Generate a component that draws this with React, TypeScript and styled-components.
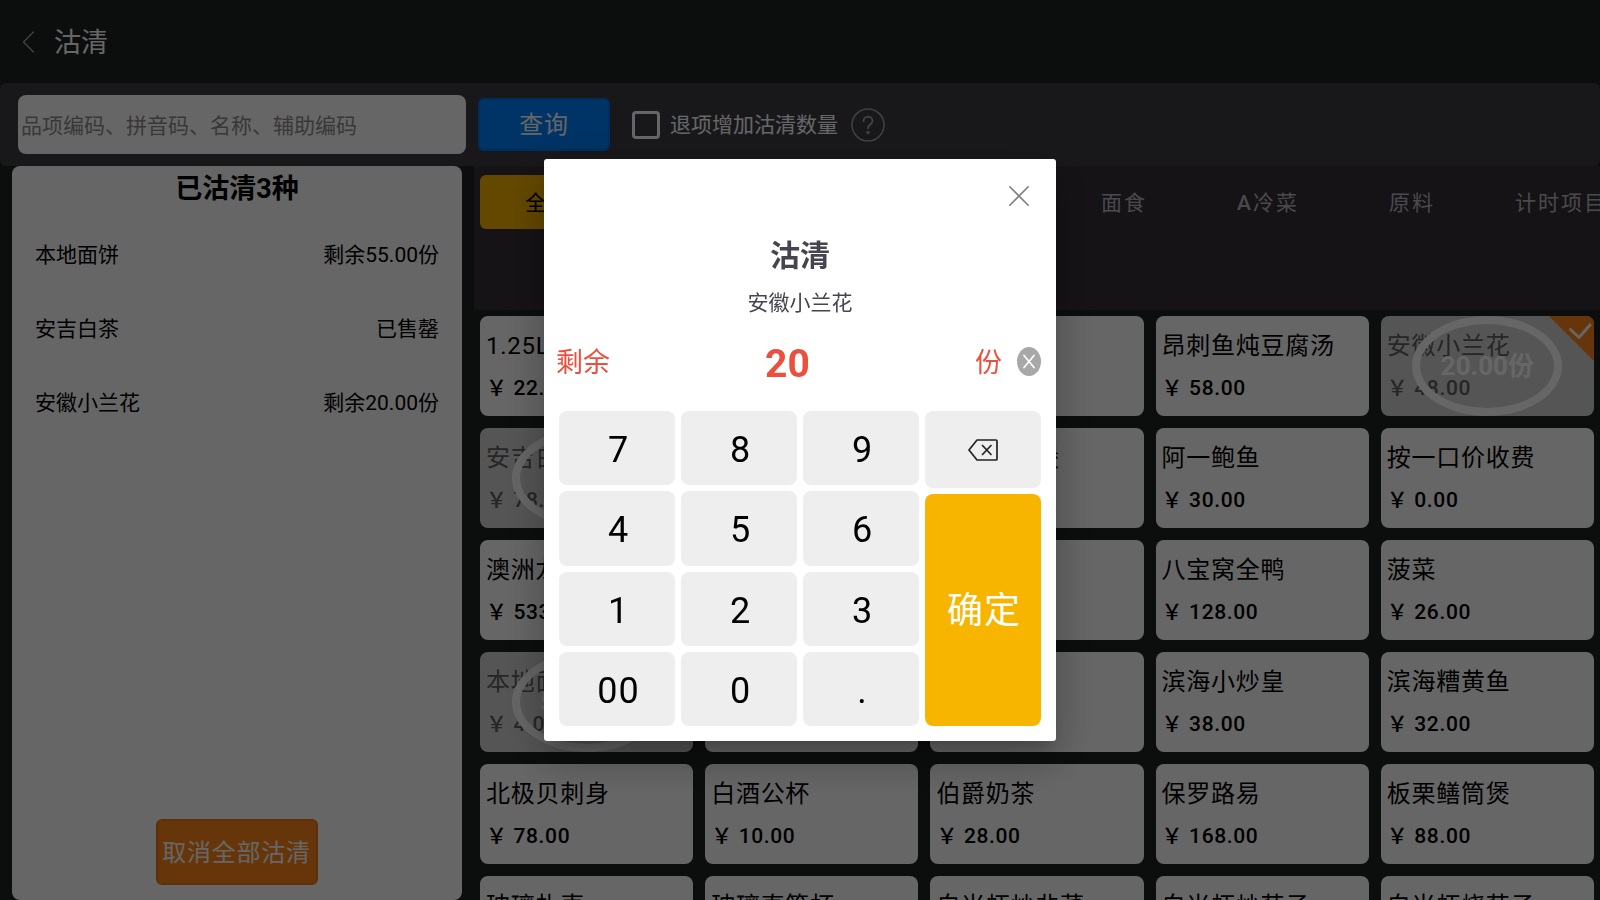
import React, { useState } from "react";
import styled, { createGlobalStyle, css } from "styled-components";

const GlobalStyle = createGlobalStyle`
  *, *::before, *::after { box-sizing: border-box; }
  html, body, #root { height: 100%; }
  body {
    margin: 0;
    overflow: hidden;
    background: #1e2321;
    color: #000;
    font-family: Roboto, "Noto Sans CJK SC", sans-serif;
    font-size: 21px;
    line-height: 32px;
  }
  button, input {
    margin: 0;
    padding: 0;
    border: 0;
    font: inherit;
    color: inherit;
    background: none;
  }
  button { cursor: pointer; }
  h1, h2, p, ul { margin: 0; padding: 0; font-weight: 400; }
  ul { list-style: none; }
`;

const Page = styled.div`
  display: flex;
  flex-direction: column;
  height: 100vh;
  overflow: hidden;
`;

const Header = styled.header`
  display: flex;
  flex: none;
  align-items: center;
  gap: 19px;
  height: 83px;
  padding-left: 22px;
  color: #fff;
`;

const BackButton = styled.button`
  display: flex;
  color: #a0a0a0;
`;

const PageTitle = styled.h1`
  padding-top: 2px;
  font-size: 27px;
`;

const Toolbar = styled.form`
  display: flex;
  flex: none;
  align-items: center;
  height: 83px;
  padding-left: 18px;
  border-radius: 6px;
  background: #3e3e43;
  color: #fff;
`;

const SearchInput = styled.input`
  flex: 0 1 448px;
  min-width: 0;
  height: 59px;
  padding: 2px 3px 0;
  border-radius: 8px;
  background: #fff;
  color: #000;
  &::placeholder { color: #8c8c8c; opacity: 1; }
`;

const ActionButton = styled.button<{ $tone: "blue" | "orange" }>`
  flex: none;
  border: 2px solid ${(p) => (p.$tone === "blue" ? "#0073e6" : "#e67a17")};
  border-radius: 6px;
  background: ${(p) => (p.$tone === "blue" ? "#0080ff" : "#ff881a")};
  color: #fff;
  font-size: 24px;
  letter-spacing: 0.03em;
  white-space: nowrap;
`;

const QueryButton = styled(ActionButton)`
  width: 132px;
  height: 53px;
  margin: 0 22px 0 12px;
`;

const CancelAllButton = styled(ActionButton)`
  height: 66px;
  margin: auto 0 15px;
  padding: 2px 5px 0 4px;
`;

const Checkbox = styled.input`
  appearance: none;
  width: 28px;
  height: 28px;
  border: 3px solid #fff;
  border-radius: 4px;
  &:checked { background: #0080ff; }
`;

const CheckLabel = styled.label`
  display: flex;
  align-items: center;
  gap: 10px;
  margin-right: 13px;
`;

const HelpButton = styled.button`
  display: flex;
  color: #a0a0a4;
`;

const Body = styled.main`
  display: flex;
  flex: 1;
  gap: 12px;
  min-height: 0;
  padding-left: 12px;
`;

const SoldPanel = styled.section`
  display: flex;
  flex: none;
  flex-direction: column;
  align-items: center;
  width: 450px;
  border-radius: 8px;
  background: #fff;
`;

const SoldTitle = styled.h2`
  margin-bottom: 6px;
  font-size: 27px;
  font-weight: 700;
  line-height: 46px;
`;

const SoldList = styled.ul`
  width: 100%;
  padding: 0 23px;
`;

const SoldRow = styled.li`
  display: flex;
  align-items: center;
  justify-content: space-between;
  height: 74px;
`;

const MenuArea = styled.section`
  display: flex;
  flex: 1;
  flex-direction: column;
  min-width: 0;
`;

const Tabs = styled.nav`
  display: flex;
  flex: none;
  align-items: flex-start;
  gap: 10px;
  height: 144px;
  padding: 9px 0 0 6px;
  overflow: hidden;
  background: #373039;
`;

const Tab = styled.button<{ $active?: boolean }>`
  flex: none;
  min-width: 134px;
  height: 54px;
  padding: 2px 25px 0 27px;
  border-radius: 6px;
  background: ${(p) => (p.$active ? "#f8b500" : "transparent")};
  color: ${(p) => (p.$active ? "#000" : "#b8b8b8")};
  letter-spacing: 2px;
  white-space: nowrap;
`;

const TabPrefix = styled.span`
  font-weight: 500;
`;

const DishGrid = styled.div`
  display: grid;
  grid-template-columns: repeat(5, 1fr);
  grid-auto-rows: 100px;
  gap: 12px;
  padding: 6px 6px 0;
  overflow: hidden;
`;

const DishCard = styled.button<{ $off: boolean }>`
  position: relative;
  display: flex;
  flex-direction: column;
  gap: 10px;
  min-width: 0;
  padding: 14px 6px;
  overflow: hidden;
  border-radius: 8px;
  background: #fff;
  text-align: left;
  letter-spacing: 0.03em;
  white-space: nowrap;
  ${(p) =>
    p.$off &&
    css`
      background: #d5d5d5;
      color: #606060;
    `}
`;

const DishName = styled.span`
  font-size: 24px;
  letter-spacing: 0.03em;
`;

const DishPrice = styled.span`
  font-weight: 500;
`;

const StockRing = styled.span`
  position: absolute;
  inset: 0;
  display: flex;
  align-items: center;
  justify-content: center;
  width: 150px;
  margin: 0 auto;
  border: 8px solid #fff;
  border-radius: 50%;
  color: #fff;
  font-size: 26px;
  font-weight: 700;
  letter-spacing: 0;
`;

const CornerMark = styled.svg`
  position: absolute;
  top: 0;
  right: 0;
`;

const Overlay = styled.div`
  position: fixed;
  inset: 0;
  display: flex;
  align-items: center;
  justify-content: center;
  background: rgba(0, 0, 0, 0.6);
`;

const Dialog = styled.div`
  display: flex;
  flex-direction: column;
  width: 512px;
  padding: 15px;
  border-radius: 3px;
  background: #fff;
  box-shadow: 0 11px 15px -7px rgba(0, 0, 0, 0.2), 0 24px 38px 3px rgba(0, 0, 0, 0.14),
    0 9px 46px 8px rgba(0, 0, 0, 0.12);
  color: #46444f;
`;

const CloseButton = styled.button`
  display: flex;
  align-self: flex-end;
  padding: 12px;
  color: #808080;
`;

const DialogTitle = styled.h2`
  margin-top: 16px;
  font-size: 30px;
  font-weight: 700;
  line-height: 44px;
  text-align: center;
`;

const DialogDish = styled.p`
  margin-top: 9px;
  text-align: center;
`;

const AmountRow = styled.div`
  display: flex;
  align-items: center;
  height: 56px;
  margin: 14px 0 22px -3px;
  color: #ec4f3d;
  font-size: 27px;
`;

const AmountLabel = styled.label`
  padding-top: 3px;
`;

const AmountInput = styled.input`
  flex: 1;
  min-width: 0;
  height: 56px;
  margin-right: 10px;
  padding-top: 6px;
  font-size: 39px;
  font-weight: 700;
  text-align: center;
  outline: none;
`;

const ClearButton = styled.button`
  display: flex;
  margin-left: 15px;
`;

const Keypad = styled.div`
  display: flex;
  gap: 6px;
  height: 315px;
`;

const DigitKeys = styled.div`
  display: grid;
  flex: 1;
  grid-template-columns: repeat(3, 1fr);
  grid-auto-rows: 1fr;
  gap: 6px;
`;

const SideKeys = styled.div`
  display: flex;
  flex-direction: column;
  gap: 6px;
  width: 116px;
`;

const Key = styled.button`
  padding: 4px 0 0 3px;
  border-radius: 8px;
  background: #eee;
  color: #000;
  font-size: 36px;
  letter-spacing: 1px;
`;

const BackspaceKey = styled(Key)`
  display: flex;
  flex: none;
  align-items: center;
  justify-content: center;
  height: 77px;
  padding: 0;
`;

const ConfirmKey = styled(Key)`
  flex: 1;
  padding: 2px 0 0 2px;
  background: #f8b500;
  color: #fff;
`;

const soldOut = [
  { name: "本地面饼", left: "剩余55.00份" },
  { name: "安吉白茶", left: "已售罄" },
  { name: "安徽小兰花", left: "剩余20.00份" },
];

const tabs: { prefix?: string; label: string }[] = [
  { label: "全部" },
  { label: "热菜" },
  { label: "酒水" },
  { label: "点心" },
  { label: "面食" },
  { prefix: "A", label: "冷菜" },
  { label: "原料" },
  { label: "计时项目" },
];

type Dish = { name: string; price: string; stock?: string; picked?: boolean };

const dishes: Dish[] = [
  { name: "1.25L可乐", price: "22.00" },
  { name: "1.25L雪碧", price: "22.00" },
  { name: "阿胶糕", price: "38.00" },
  { name: "昂刺鱼炖豆腐汤", price: "58.00" },
  { name: "安徽小兰花", price: "48.00", stock: "20.00份", picked: true },
  { name: "安吉白茶", price: "78.00", stock: "已售罄" },
  { name: "阿婆菜", price: "28.00" },
  { name: "阿一鲍鱼煲", price: "68.00" },
  { name: "阿一鲍鱼", price: "30.00" },
  { name: "按一口价收费", price: "0.00" },
  { name: "澳洲龙虾", price: "533.00" },
  { name: "八宝饭", price: "28.00" },
  { name: "八宝粥", price: "18.00" },
  { name: "八宝窝全鸭", price: "128.00" },
  { name: "菠菜", price: "26.00" },
  { name: "本地面饼", price: "4.00", stock: "55.00份" },
  { name: "本地鸡", price: "98.00" },
  { name: "冰粉", price: "12.00" },
  { name: "滨海小炒皇", price: "38.00" },
  { name: "滨海糟黄鱼", price: "32.00" },
  { name: "北极贝刺身", price: "78.00" },
  { name: "白酒公杯", price: "10.00" },
  { name: "伯爵奶茶", price: "28.00" },
  { name: "保罗路易", price: "168.00" },
  { name: "板栗鳝筒煲", price: "88.00" },
  { name: "玻璃扎壶", price: "20.00" },
  { name: "玻璃直筒杯", price: "10.00" },
  { name: "白米虾炒韭菜", price: "48.00" },
  { name: "白米虾炒茄子", price: "48.00" },
  { name: "白米虾烧茄子", price: "48.00" },
];

const keys = ["7", "8", "9", "4", "5", "6", "1", "2", "3", "00", "0", "."];

const stroke = {
  fill: "none",
  stroke: "currentColor",
  strokeLinecap: "round" as const,
  strokeLinejoin: "round" as const,
};

export default function App() {
  const [amount, setAmount] = useState("20");

  return (
    <>
      <GlobalStyle />
      <Page>
        <Header>
          <BackButton type="button" aria-label="返回">
            <svg width="13" height="22" viewBox="0 0 13 22" {...stroke} strokeWidth="1.5">
              <path d="M11.5 1 1.5 11l10 10" />
            </svg>
          </BackButton>
          <PageTitle>沽清</PageTitle>
        </Header>

        <Toolbar onSubmit={(e) => e.preventDefault()}>
          <SearchInput aria-label="搜索" placeholder="品项编码、拼音码、名称、辅助编码" />
          <QueryButton $tone="blue" type="submit">查询</QueryButton>
          <CheckLabel>
            <Checkbox type="checkbox" />
            退项增加沽清数量
          </CheckLabel>
          <HelpButton type="button" aria-label="帮助">
            <svg width="34" height="34" viewBox="0 0 34 34" {...stroke} strokeWidth="1.6">
              <circle cx="17" cy="17" r="16" />
              <path d="M12.5 13.2c0-2.600 1.900-4.400 4.500-4.400s4.500 1.700 4.500 4.100c0 3.300-4.500 3.700-4.500 7.300" strokeWidth="2" />
              <circle cx="17" cy="24.500" r="1" fill="currentColor" />
            </svg>
          </HelpButton>
        </Toolbar>

        <Body>
          <SoldPanel>
            <SoldTitle>已沽清3种</SoldTitle>
            <SoldList>
              {soldOut.map((s) => (
                <SoldRow key={s.name}>
                  <span>{s.name}</span>
                  <span>{s.left}</span>
                </SoldRow>
              ))}
            </SoldList>
            <CancelAllButton $tone="orange" type="button">取消全部沽清</CancelAllButton>
          </SoldPanel>

          <MenuArea>
            <Tabs>
              {tabs.map((t, i) => (
                <Tab key={t.label} type="button" $active={i === 0}>
                  {t.prefix && <TabPrefix>{t.prefix}</TabPrefix>}
                  {t.label}
                </Tab>
              ))}
            </Tabs>
            <DishGrid>
              {dishes.map((d) => (
                <DishCard key={d.name} type="button" $off={!!d.stock}>
                  <DishName>{d.name}</DishName>
                  <DishPrice>￥ {d.price}</DishPrice>
                  {d.stock && <StockRing>{d.stock}</StockRing>}
                  {d.picked && (
                    <CornerMark width="45" height="45" viewBox="0 0 45 45">
                      <path d="M0 0h45v45z" fill="#ff881a" />
                      <path d="M21.500 13.500 30 21.500 41 9" {...stroke} stroke="#fff" strokeWidth="3" />
                    </CornerMark>
                  )}
                </DishCard>
              ))}
            </DishGrid>
          </MenuArea>
        </Body>
      </Page>

      <Overlay>
        <Dialog role="dialog" aria-modal="true" aria-labelledby="dialog-title">
          <CloseButton type="button" aria-label="关闭">
            <svg width="20" height="20" viewBox="0 0 20 20" {...stroke} strokeWidth="1.6">
              <path d="M.8.8l18.400 18.400M19.200.8.8 19.200" />
            </svg>
          </CloseButton>
          <DialogTitle id="dialog-title">沽清</DialogTitle>
          <DialogDish>安徽小兰花</DialogDish>
          <AmountRow>
            <AmountLabel htmlFor="amount">剩余</AmountLabel>
            <AmountInput id="amount" value={amount} onChange={(e) => setAmount(e.target.value)} />
            <AmountLabel as="span">份</AmountLabel>
            <ClearButton type="button" aria-label="清空" onClick={() => setAmount("")}>
              <svg width="24" height="29" viewBox="0 0 24 29" {...stroke}>
                <ellipse cx="12" cy="14.500" rx="12" ry="14.500" fill="#a8a8a8" stroke="none" />
                <path d="M7 8.500l10 12M17 8.500l-10 12" stroke="#fff" strokeWidth="1.700" />
              </svg>
            </ClearButton>
          </AmountRow>
          <Keypad>
            <DigitKeys>
              {keys.map((k) => (
                <Key key={k} type="button" onClick={() => setAmount(amount + k)}>{k}</Key>
              ))}
            </DigitKeys>
            <SideKeys>
              <BackspaceKey type="button" aria-label="退格" onClick={() => setAmount(amount.slice(0, -1))}>
                <svg width="30" height="22" viewBox="0 0 30 22" {...stroke} stroke="#222" strokeWidth="1.700">
                  <path d="M9 1h19a1 1 0 0 1 1 1v18a1 1 0 0 1-1 1H9L1 11z" />
                  <path d="M14.500 6.500l8.500 9M23 6.500l-8.500 9" />
                </svg>
              </BackspaceKey>
              <ConfirmKey type="button">确定</ConfirmKey>
            </SideKeys>
          </Keypad>
        </Dialog>
      </Overlay>
    </>
  );
}
